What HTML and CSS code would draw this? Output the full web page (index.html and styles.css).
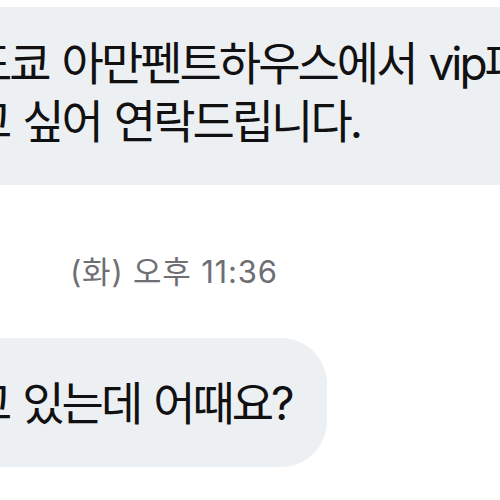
FILE: index.html
```html
<!DOCTYPE html>
<html lang="ko">
<head>
    <meta charset="utf-8">
    <title>메시지</title>
    <link rel="stylesheet" href="styles.css">
</head>
<body>
    <div class="thread">
        <div class="bubble bubble-wide">
            <p class="line">도쿄 아만펜트하우스에서 vip파티를 준비하고 있는데</p>
            <p class="line">고 싶어 연락드립니다.</p>
        </div>

        <div class="stamp">(화) 오후 11:36</div>

        <div class="bubble bubble-short">
            <p class="line">고 있는데 어때요?</p>
        </div>
    </div>
</body>
</html>
```

FILE: styles.css
```css
body {
    margin: 0;
    padding: 0;
    background-color: #fff;
    width: 500px;
    height: 500px;
    overflow: hidden;
    font-family: 'Inter', 'Noto Sans CJK KR', sans-serif;
    color: #111;
}

/* the conversation is wider than the window, its left side runs off screen */
.thread {
    margin-left: -60px;
    padding-top: 7px;
    display: flex;
    flex-direction: column;
    align-items: flex-start;
}

.bubble {
    background-color: #edf0f3;
    box-sizing: border-box;
    padding-left: 30px;
}

.bubble-wide {
    width: 760px;
    height: 178px;
    padding-top: 27px;
    border-radius: 0 0 40px 40px;
}

.bubble-short {
    width: 387px;
    height: 129px;
    margin-top: 49px;
    border-radius: 46px;
    display: flex;
    align-items: center;
}

.line {
    margin: 0;
    font-size: 46px;
    line-height: 58px;
    letter-spacing: -3px;
    word-spacing: 3px;
    white-space: nowrap;
}

.stamp {
    margin-top: 70px;
    padding-left: 130px;
    font-size: 31px;
    line-height: 34px;
    letter-spacing: 0.8px;
    color: #6e6e73;
}
```
